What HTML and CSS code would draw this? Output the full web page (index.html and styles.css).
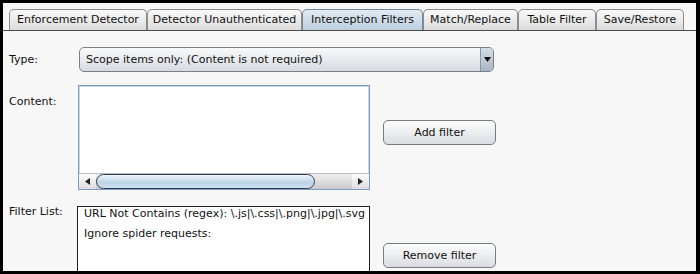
FILE: index.html
```html
<!DOCTYPE html>
<html lang="en">
<head>
  <meta charset="UTF-8" />
  <title>Interception Filters</title>
  <link rel="stylesheet" href="styles.css">
</head>
<body>
  <div class="window">
    <div class="tabs">
      <div class="tab tab-enf">Enforcement Detector</div>
      <div class="tab tab-unauth">Detector Unauthenticated</div>
      <div class="tab tab-filters active">Interception Filters</div>
      <div class="tab tab-match">Match/Replace</div>
      <div class="tab tab-table">Table Filter</div>
      <div class="tab tab-save">Save/Restore</div>
    </div>

    <div class="panel">
      <label class="lbl lbl-type">Type:</label>
      <div class="combo">
        <span class="combo-text">Scope items only: (Content is not required)</span>
        <span class="combo-arrow">
          <svg width="7" height="5" viewBox="0 0 7 5"><polygon points="0,0 7,0 3.5,5" fill="#111"/></svg>
        </span>
      </div>

      <label class="lbl lbl-content">Content:</label>
      <div class="textbox">
        <div class="tb-area"></div>
        <div class="hscroll">
          <div class="sb-btn">
            <svg width="5" height="7" viewBox="0 0 5 7"><polygon points="5,0 5,7 0,3.5" fill="#222"/></svg>
          </div>
          <div class="sb-thumb"></div>
          <div class="sb-track"></div>
          <div class="sb-btn">
            <svg width="5" height="7" viewBox="0 0 5 7"><polygon points="0,0 0,7 5,3.5" fill="#222"/></svg>
          </div>
        </div>
      </div>
      <button class="btn btn-add">Add filter</button>

      <label class="lbl lbl-list">Filter List:</label>
      <div class="listbox">
        <div class="list-items">
          <div class="item">URL Not Contains (regex): \.js|\.css|\.png|\.jpg|\.svg</div>
          <div class="item">Ignore spider requests:</div>
        </div>
      </div>
      <button class="btn btn-remove">Remove filter</button>
    </div>
  </div>
</body>
</html>
```

FILE: styles.css
```css
* {
  box-sizing: border-box;
}
body {
  margin: 0;
  background: #000;
  font-family: "DejaVu Sans", sans-serif;
  font-size: 11px;
  color: #111;
}
.window {
  margin: 3px 4px 3px 3px;
  height: 268px;
  background: #f7f7f7;
  overflow: hidden;
}

/* tab strip */
.tabs {
  display: flex;
  padding: 6px 0 0 6px;
  border-bottom: 1px solid #4c4c4c;
}
.tab {
  height: 21px;
  line-height: 20px;
  text-align: center;
  border: 1px solid #8c8c8c;
  border-bottom: none;
  border-radius: 5px 5px 0 0;
  background: linear-gradient(#f9f9f9, #dcdcdc);
  white-space: nowrap;
  overflow: hidden;
}
.tab.active {
  background: linear-gradient(#e2eaf2, #bccfdf);
  border-color: #74879a;
}
.tab-enf { width: 138px; }
.tab-unauth { width: 155px; }
.tab-filters { width: 121px; }
.tab-match { width: 95px; }
.tab-table { width: 78px; }
.tab-save { width: 88px; }

/* form */
.panel {
  display: grid;
  grid-template-columns: 56px 292px 113px;
  grid-template-rows: 25px 105px 80px;
  column-gap: 13px;
  row-gap: 13px;
  padding: 16px 0 0 6px;
}
.lbl {
  line-height: 13px;
  white-space: nowrap;
}
.lbl-type {
  align-self: center;
}
.lbl-content {
  margin-top: 10px;
}
.lbl-list {
  margin-top: 2px;
}
.combo {
  grid-column: 2 / 4;
  margin: 0 2px 0 1px;
  display: flex;
  border: 1px solid #7b8087;
  border-radius: 5px;
  background: linear-gradient(#f8f9fa, #d7dbe0);
  overflow: hidden;
}
.combo-text {
  flex: 1;
  padding-left: 6px;
  line-height: 23px;
}
.combo-arrow {
  width: 13px;
  display: flex;
  align-items: center;
  justify-content: center;
  border-left: 1px solid #8794a1;
  background: linear-gradient(#d3dce5, #a9b7c5);
}

.textbox {
  display: flex;
  flex-direction: column;
  border: 1px solid #7a9cc2;
  box-shadow: inset 0 0 0 1px #c6d7e9;
  background: #fff;
}
.tb-area {
  flex: 1;
}
.hscroll {
  height: 16px;
  display: flex;
  background: linear-gradient(#f0f0f0, #c9c9c9);
  border-top: 1px solid #b9bcc0;
}
.sb-btn {
  width: 17px;
  display: flex;
  align-items: center;
  justify-content: center;
  background: linear-gradient(#fbfbfb, #dedede);
}
.sb-thumb {
  width: 219px;
  border: 1px solid #2e3d4c;
  border-radius: 8px;
  background: linear-gradient(#eef4fa, #bdd3e7 60%, #cfe0ef);
}
.sb-track {
  flex: 1;
}

.btn {
  font-family: inherit;
  font-size: 11px;
  color: #111;
  height: 25px;
  padding: 0;
  border: 1px solid #767b82;
  border-radius: 5px;
  background: linear-gradient(#fdfdfd, #d9dce1);
  align-self: start;
}
.btn-add {
  margin-top: 35px;
}
.btn-remove {
  margin-top: 40px;
}

.listbox {
  margin: 3px 0 0 -1px;
  height: 90px;
  border: 1px solid #1e1e1e;
  background: #fff;
  overflow: hidden;
}
.list-items {
  margin-top: -3px;
  padding-left: 6px;
}
.item {
  line-height: 20px;
  white-space: nowrap;
}
```
